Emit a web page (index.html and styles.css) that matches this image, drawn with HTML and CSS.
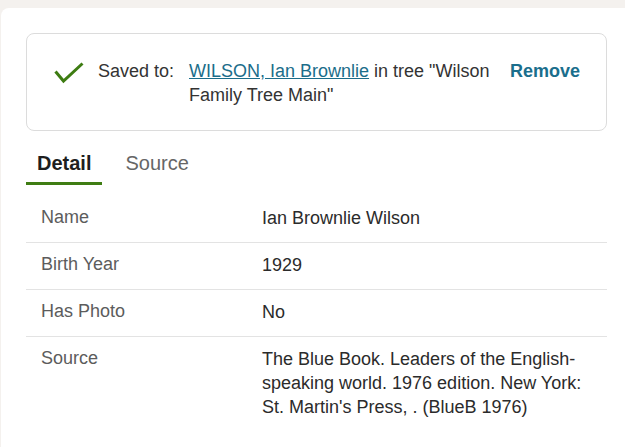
FILE: index.html
```html
<!DOCTYPE html>
<html lang="en">
<head>
    <meta charset="utf-8">
    <title>Record detail</title>
    <link rel="stylesheet" href="styles.css">
</head>
<body>
<div class="panel">
    <div class="saved">
        <svg class="saved-icon" width="30" height="22" viewBox="0 0 30 22">
            <polyline points="1.5,9.5 9.5,19 28.5,1.5" fill="none" stroke="#3d7c12" stroke-width="3"/>
        </svg>
        <span class="saved-label">Saved to:</span>
        <p class="saved-text"><a href="#">WILSON, Ian Brownlie</a> in tree "Wilson Family Tree Main"</p>
        <a class="remove" href="#">Remove</a>
    </div>

    <div class="tabs">
        <span class="tab active">Detail</span>
        <span class="tab">Source</span>
    </div>

    <div class="facts">
        <div class="row">
            <span class="label">Name</span>
            <span class="value">Ian Brownlie Wilson</span>
        </div>
        <div class="row">
            <span class="label">Birth Year</span>
            <span class="value">1929</span>
        </div>
        <div class="row">
            <span class="label">Has Photo</span>
            <span class="value">No</span>
        </div>
        <div class="row last">
            <span class="label">Source</span>
            <span class="value">The Blue Book. Leaders of the English-speaking world. 1976 edition. New York: St. Martin's Press, . (BlueB 1976)</span>
        </div>
    </div>
</div>
</body>
</html>
```

FILE: styles.css
```css
html { font-family: "Liberation Sans", Arial, sans-serif; }
body {
    margin: 0;
    background: #f4f1ee;
    color: #2b2b2b;
    font-size: 18px;
    line-height: 24px;
}

.panel {
    margin: 8px 0 0 1px;
    padding: 25px 18px 30px 25px;
    background: #fff;
    border-radius: 8px 0 0 0;
    min-height: 400px;
}

/* saved-to notice */
.saved {
    display: flex;
    align-items: flex-start;
    border: 1px solid #dcdcdc;
    border-radius: 8px;
    padding: 25px 26px 23px 27px;
}
.saved-icon { margin-top: 3px; flex: none; }
.saved-label { margin-left: 14px; width: 91px; flex: none; color: #333; }
.saved-text { margin: 0; flex: 1; color: #333; }
.saved-text a { color: #1b6d8a; }
.remove {
    margin-left: 18px;
    color: #1a6e8c;
    font-weight: bold;
    text-decoration: none;
}

/* tabs */
.tabs {
    display: flex;
    gap: 12px;
    margin-top: 20px;
}
.tab {
    padding: 0 11px 7px;
    border-bottom: 3px solid transparent;
    color: #666;
    font-size: 20px;
}
.tab.active {
    color: #1e1e1e;
    font-weight: bold;
    border-bottom-color: #3f7d13;
}

/* fact rows */
.facts { margin-top: 11px; }
.row {
    display: grid;
    grid-template-columns: 221px 1fr;
    padding: 9px 0 12px 15px;
    border-bottom: 1px solid #e3e3e3;
}
.row.last { border-bottom: none; }
.label { color: #5c5c5c; }
.value { padding: 1px 20px 0 0; }
```
